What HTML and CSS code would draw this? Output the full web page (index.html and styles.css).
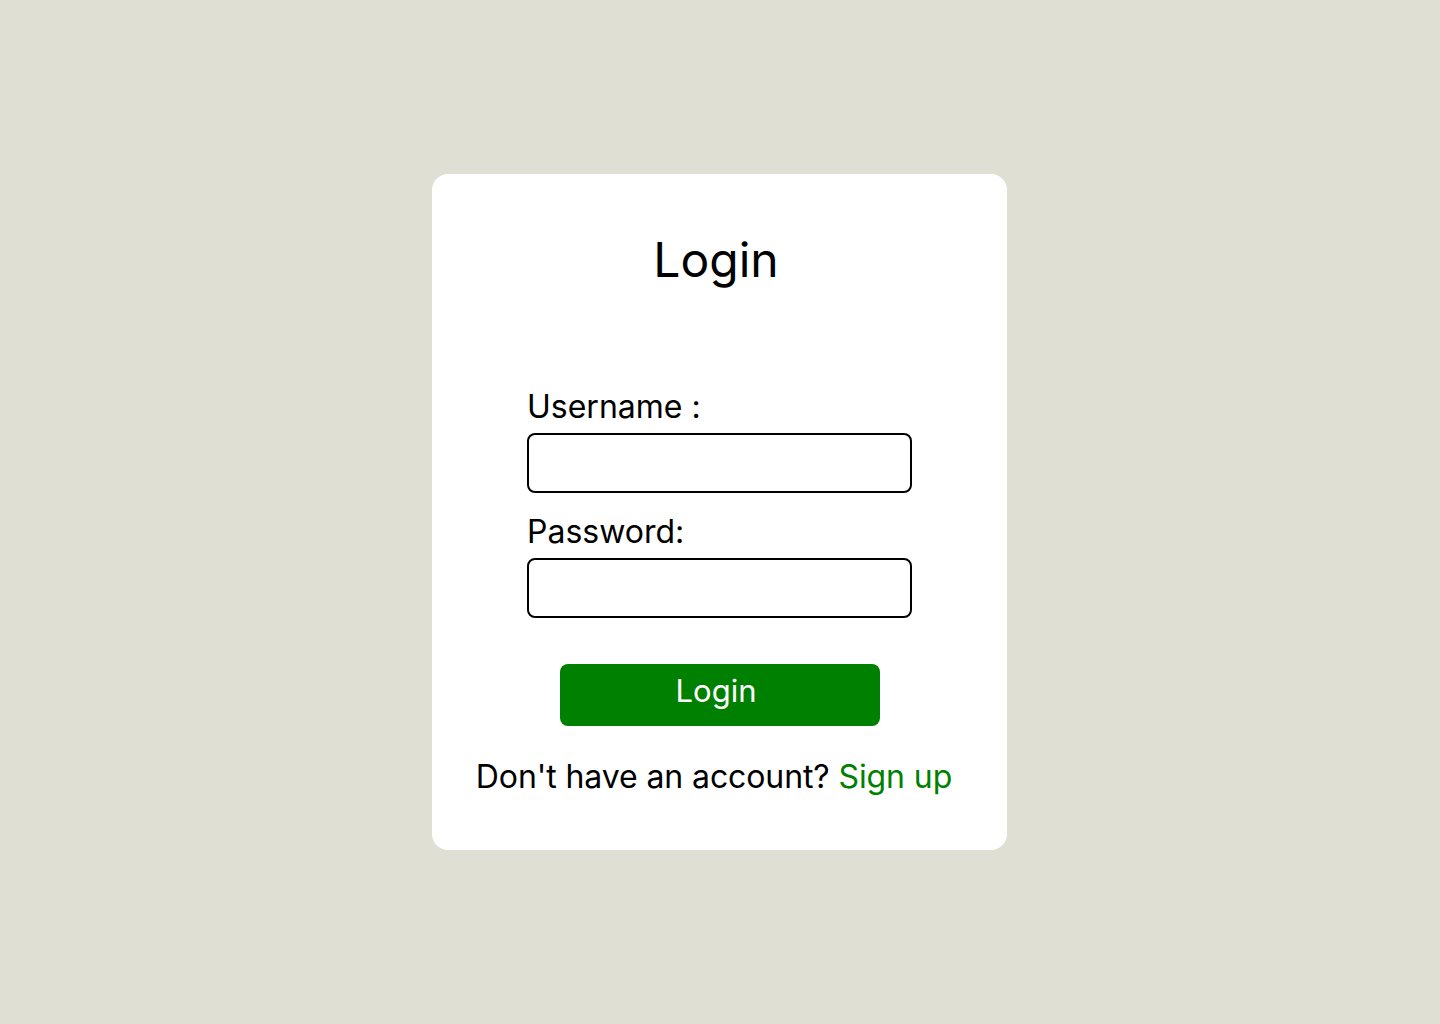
FILE: index.html
```html
<!DOCTYPE html>
<html lang="en">
<head>
<meta charset="utf-8">
<title>Login</title>
<link rel="stylesheet" href="styles.css">
</head>
<body>
<main class="page">
  <section class="card">
    <h1 class="title">Login</h1>
    <form class="form">
      <label class="label" for="username">Username :</label>
      <input class="field" id="username" type="text">
      <label class="label label-second" for="password">Password:</label>
      <input class="field" id="password" type="password">
      <button class="btn" type="button">Login</button>
    </form>
    <p class="signup">Don't have an account? <a class="signup-link" href="#">Sign up</a></p>
  </section>
</main>
</body>
</html>
```
FILE: styles.css
```css
* { box-sizing: border-box; }
html, body { margin: 0; padding: 0; }
body {
  background: #dfdfd3;
  font-family: Inter, "Noto Sans", sans-serif;
  color: #000;
}
.page {
  width: 1440px;
  height: 1024px;
  display: flex;
  align-items: center;
  justify-content: center;
}
.card {
  width: 575px;
  height: 676px;
  margin-right: 1px;
  background: #fff;
  border-radius: 16px;
  display: flex;
  flex-direction: column;
  align-items: center;
  padding-top: 57px;
}
.title {
  margin: 0;
  padding-right: 7px;
  font-size: 48px;
  font-weight: 400;
  line-height: 58px;
}
.form {
  width: 385px;
  display: flex;
  flex-direction: column;
  margin-top: 98px;
}
.label {
  font-size: 32px;
  line-height: 39px;
  margin-bottom: 7px;
}
.label-second { margin-top: 19px; }
.field {
  width: 385px;
  height: 60px;
  border: 2px solid #000;
  border-radius: 8px;
  background: #fff;
  font: inherit;
  font-size: 24px;
  padding: 0 12px;
  outline: none;
}
.btn {
  align-self: center;
  margin-top: 46px;
  width: 320px;
  height: 62px;
  border: none;
  border-radius: 8px;
  background: #008000;
  color: #fff;
  font-family: inherit;
  font-size: 31px;
  padding: 0 7px 9px 0;
  cursor: pointer;
}
.signup {
  margin: 31px 0 0;
  padding-right: 11px;
  font-size: 32px;
  line-height: 39px;
  letter-spacing: -0.1px;
}
.signup-link {
  color: #008000;
  text-decoration: none;
}
```
